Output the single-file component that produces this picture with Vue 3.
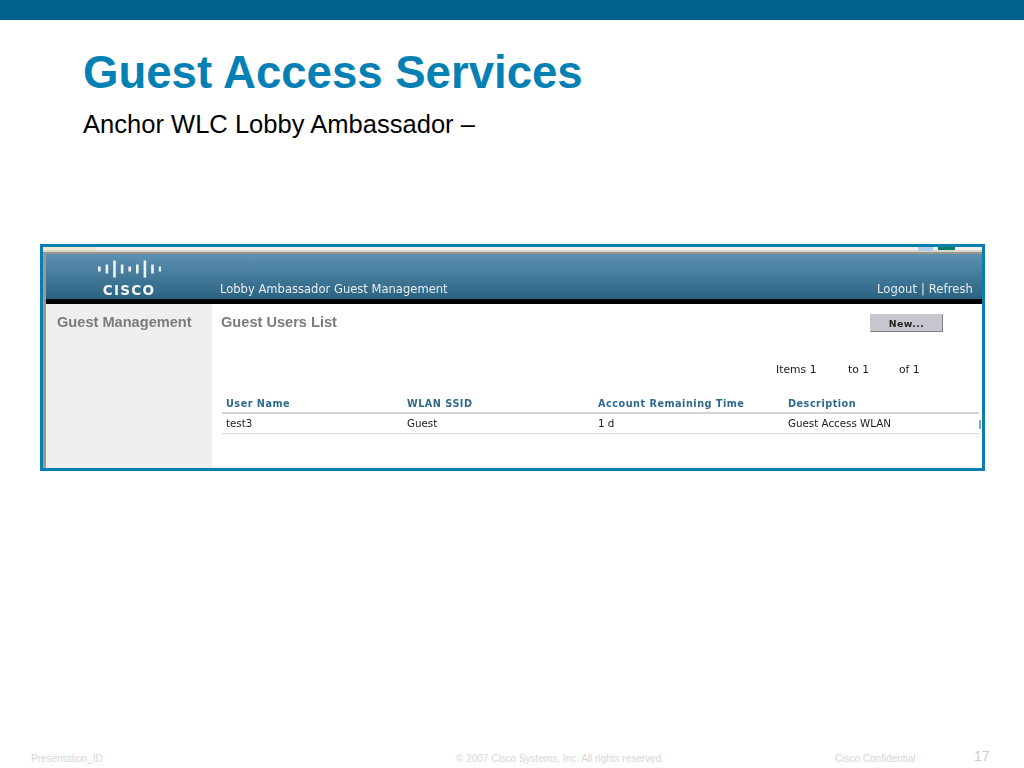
<script setup>
const cols = [
  { head: 'User Name', cell: 'test3' },
  { head: 'WLAN SSID', cell: 'Guest' },
  { head: 'Account Remaining Time', cell: '1 d' },
  { head: 'Description', cell: 'Guest Access WLAN' }
]
const logoBars = [5, 9, 17, 9, 5, 9, 17, 9, 5]
</script>

<template>
  <div class="slide">
    <div class="topbar"></div>
    <div class="heading">
      <h1 class="title">Guest Access Services</h1>
      <p class="subtitle">Anchor WLC Lobby Ambassador –</p>
    </div>

    <div class="frame">
      <div class="chrome">
        <div class="chrome-tab"></div>
        <div class="chrome-spacer"></div>
        <div class="chrome-blue"></div>
        <div class="chrome-green"></div>
      </div>
      <div class="app">
        <header class="app-header">
          <div class="logo">
            <svg class="logo-bars" width="64" height="18" viewBox="0 0 64 18">
              <rect
                v-for="(h, i) in logoBars"
                :key="i"
                :x="i * 7.6 + 1"
                :y="(18 - h) / 2"
                width="2.6"
                :height="h"
                fill="#eef3f6"
              />
            </svg>
            <span class="logo-word">CISCO</span>
          </div>
          <div class="app-name">Lobby Ambassador Guest Management</div>
          <div class="app-links">Logout | Refresh</div>
        </header>
        <div class="blackbar"></div>
        <div class="app-body">
          <aside class="side">Guest Management</aside>
          <main class="content">
            <div class="content-top">
              <h2 class="list-title">Guest Users List</h2>
              <button class="new-btn">New...</button>
            </div>
            <div class="pager">
              <span class="p1">Items 1</span>
              <span class="p2">to 1</span>
              <span class="p3">of 1</span>
            </div>
            <div class="table">
              <div v-for="c in cols" :key="c.head" class="col">
                <div class="th">{{ c.head }}</div>
                <div class="td">{{ c.cell }}</div>
              </div>
              <div class="edge-col"><span class="edge-icon"></span></div>
            </div>
          </main>
        </div>
      </div>
    </div>

    <footer class="footer">
      <span class="f-id">Presentation_ID</span>
      <span class="f-copy">© 2007 Cisco Systems, Inc. All rights reserved.</span>
      <span class="f-conf">Cisco Confidential</span>
      <span class="f-num">17</span>
    </footer>
  </div>
</template>

<style>
html, body { margin: 0; background: #fff; }
</style>

<style scoped>
.slide {
  width: 1024px;
  height: 768px;
  display: flex;
  flex-direction: column;
  overflow: hidden;
  background: #fff;
  font-family: "Liberation Sans", Arial, sans-serif;
}
.topbar { height: 20px; background: #00628b; flex: none; }
.heading { padding-left: 83px; height: 224px; flex: none; }
.title {
  margin: 0;
  padding-top: 27px;
  font-size: 45.55px;
  line-height: 52px;
  font-weight: 700;
  color: #0580b4;
}
.subtitle {
  margin: 0;
  padding-top: 10px;
  font-size: 25.55px;
  line-height: 30px;
  color: #000;
}
.frame {
  width: 945px;
  height: 227px;
  margin-left: 40px;
  box-sizing: border-box;
  border: 3px solid #0a7eb0;
  display: flex;
  flex-direction: column;
  flex: none;
  overflow: hidden;
  background: #fff;
}
.frame > * { filter: blur(0.35px); }
.chrome {
  height: 7px;
  flex: none;
  display: flex;
  background: linear-gradient(#f1f1ec 0, #f1f1ec 3px, #d9d8cc 3px, #d9d8cc 5px, #9a968a 5px);
}
.chrome-tab { width: 52px; background: linear-gradient(#eee9d6 0, #eee9d6 3px, #dcd8c4 3px, #dcd8c4 5px, #9a968a 5px); }
.chrome-spacer { flex: 1; }
.chrome-blue { width: 15px; height: 4px; background: #b4cdea; margin-right: 5px; }
.chrome-green { width: 17px; height: 3px; background: #0d7c66; margin-right: 27px; }
.app {
  flex: 1;
  min-height: 0;
  margin-left: 3px;
  display: flex;
  flex-direction: column;
  font-family: "DejaVu Sans", Verdana, sans-serif;
  box-shadow: -3px 0 0 #9b9b96;
}
.app-header {
  height: 45px;
  flex: none;
  display: flex;
  align-items: flex-end;
  background: linear-gradient(#5c91b1, #2b6281);
  color: #e6eef3;
  font-size: 11.55px;
}
.logo {
  width: 174px;
  flex: none;
  display: flex;
  flex-direction: column;
  align-items: center;
  padding: 0 8px 2px 0;
  box-sizing: border-box;
}
.logo-bars { display: block; margin-bottom: 5px; }
.logo-word {
  font-weight: 700;
  font-size: 13.6px;
  line-height: 14px;
  letter-spacing: 1.2px;
  color: #f4f7f9;
}
.app-name { flex: 1; padding-bottom: 3px; line-height: 14px; }
.app-links { padding-right: 9px; padding-bottom: 3px; line-height: 14px; letter-spacing: 0.1px; }
.blackbar { height: 5px; background: #000; flex: none; }
.app-body { flex: 1; min-height: 0; display: flex; }
.side {
  width: 166px;
  flex: none;
  box-sizing: border-box;
  padding: 9px 0 0 11px;
  background: #efefef;
  color: #7b7b7b;
  font-family: "Liberation Sans", Arial, sans-serif;
  font-size: 14.6px;
  line-height: 18px;
  font-weight: 700;
}
.content { flex: 1; min-width: 0; padding-left: 9px; }
.content-top { display: flex; justify-content: space-between; padding-top: 9px; height: 39px; box-sizing: border-box; }
.list-title {
  margin: 0;
  color: #7b7b7b;
  font-family: "Liberation Sans", Arial, sans-serif;
  font-size: 14.6px;
  line-height: 19px;
  font-weight: 700;
}
.new-btn {
  width: 73px;
  height: 18px;
  margin: 1px 39px 0 0;
  padding: 0;
  border: 1px solid;
  border-color: #c6c6cf #808080 #808080 #c6c6cf;
  background: #c6c6cf;
  color: #222;
  font-family: "DejaVu Sans", Verdana, sans-serif;
  font-size: 9.4px;
  font-weight: 700;
  letter-spacing: 0.4px;
}
.pager {
  display: flex;
  height: 14px;
  margin-top: 20px;
  padding-left: 555px;
  font-size: 10.8px;
  line-height: 14px;
  color: #1a1a1a;
}
.p1 { width: 72px; }
.p2 { width: 51px; }
.table {
  display: grid;
  grid-template-columns: 181px 191px 190px 195px 4px;
  margin-top: 17px;
  margin-left: 1px;
}
.col { min-width: 0; }
.th {
  height: 20px;
  box-sizing: border-box;
  padding: 0 0 0 4px;
  border-bottom: 2px solid #d4d4d4;
  font-size: 9.7px;
  line-height: 19px;
  font-weight: 700;
  letter-spacing: 0.5px;
  color: #2f6a8c;
  white-space: nowrap;
}
.td {
  height: 20px;
  box-sizing: border-box;
  padding: 0 0 0 4px;
  border-bottom: 1px solid #dadada;
  font-size: 10.3px;
  line-height: 18px;
  color: #1a1a1a;
  white-space: nowrap;
}
.edge-col { padding-top: 26px; }
.edge-icon { display: block; width: 2px; height: 9px; background: #7fa6c2; }
.footer {
  margin-top: auto;
  height: 26px;
  flex: none;
  display: flex;
  align-items: flex-start;
  font-size: 10px;
  line-height: 12px;
  color: #d6d6d6;
  padding-left: 31px;
}
.footer span { padding-top: 11px; }
.f-id { width: 425px; }
.f-copy { width: 379px; }
.f-conf { width: 139px; }
.footer .f-num { font-size: 14px; line-height: 14px; padding-top: 7px; color: #c8cdd2; }
</style>
